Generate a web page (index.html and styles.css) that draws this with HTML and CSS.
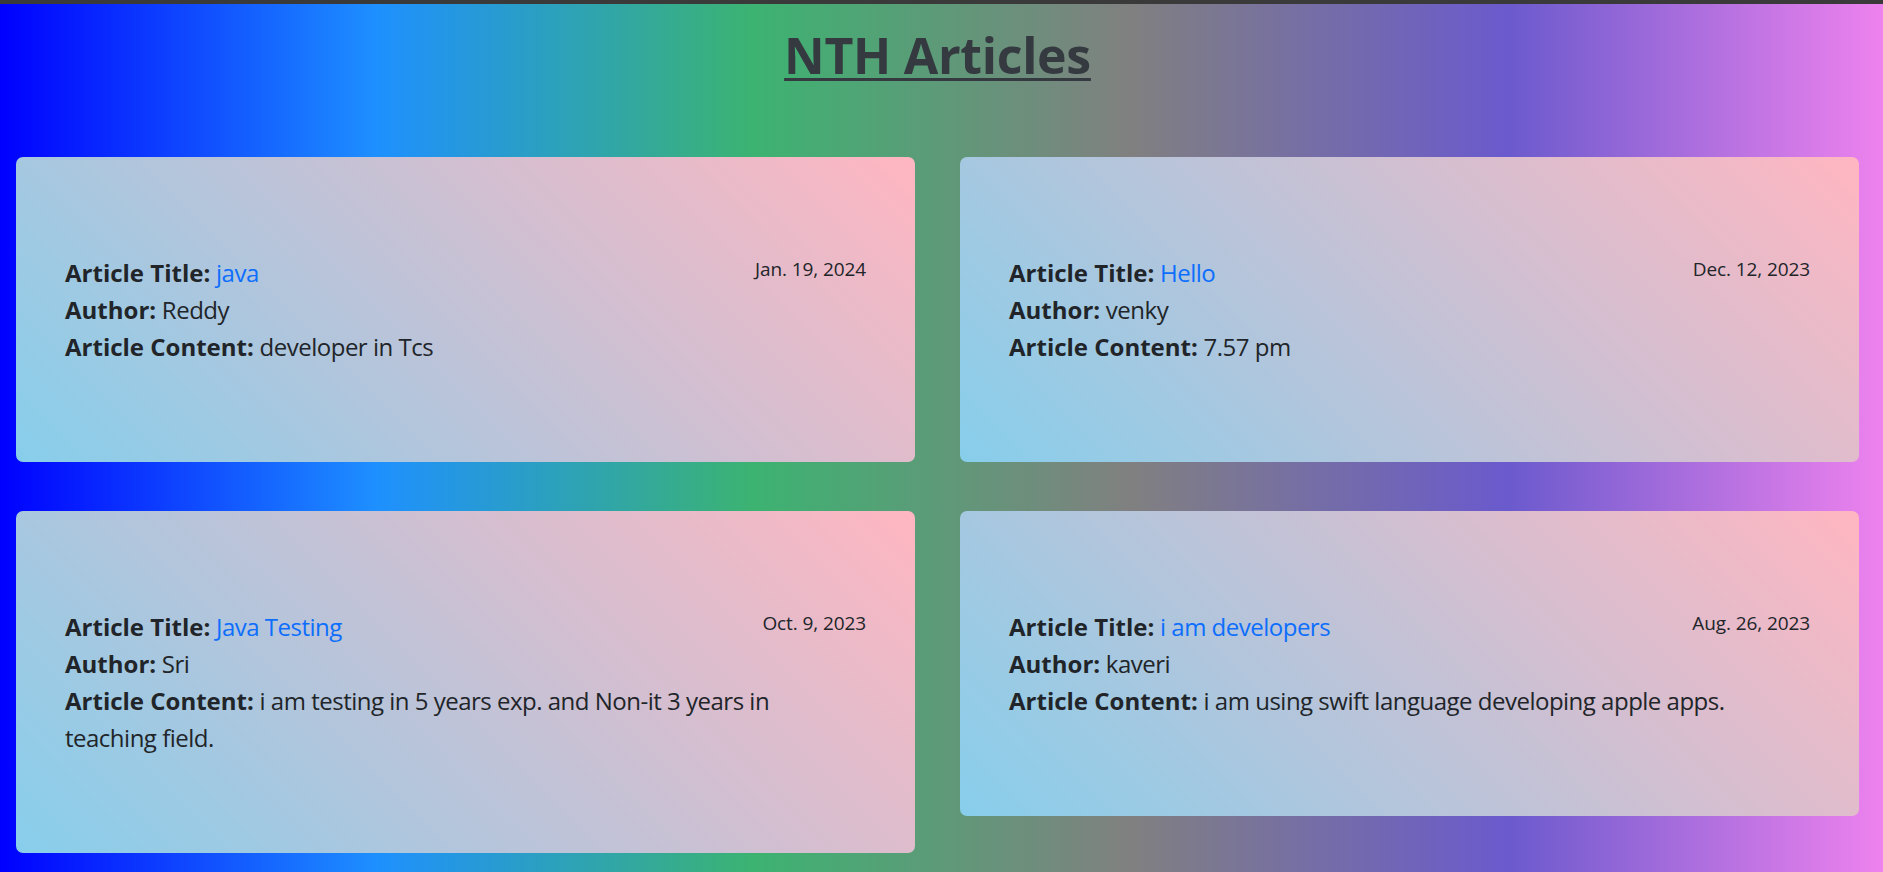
FILE: index.html
```html
<!DOCTYPE html>
<html lang="en">
<head>
<meta charset="utf-8">
<title>NTH Articles</title>
<link rel="stylesheet" href="styles.css">
</head>
<body>
<div class="topbar"></div>
<main class="page">
  <h1 class="page-title">NTH Articles</h1>
  <div class="grid">
    <article class="card">
      <span class="date">Jan. 19, 2024</span>
      <p class="line"><b>Article Title:</b> <a href="#" class="link">java</a></p>
      <p class="line"><b>Author:</b> Reddy</p>
      <p class="line"><b>Article Content:</b> developer in Tcs</p>
    </article>
    <article class="card">
      <span class="date">Dec. 12, 2023</span>
      <p class="line"><b>Article Title:</b> <a href="#" class="link">Hello</a></p>
      <p class="line"><b>Author:</b> venky</p>
      <p class="line"><b>Article Content:</b> 7.57 pm</p>
    </article>
    <article class="card">
      <span class="date">Oct. 9, 2023</span>
      <p class="line"><b>Article Title:</b> <a href="#" class="link">Java Testing</a></p>
      <p class="line"><b>Author:</b> Sri</p>
      <p class="line"><b>Article Content:</b> i am testing in 5 years exp. and Non-it 3 years in teaching field.</p>
    </article>
    <article class="card">
      <span class="date">Aug. 26, 2023</span>
      <p class="line"><b>Article Title:</b> <a href="#" class="link">i am developers</a></p>
      <p class="line"><b>Author:</b> kaveri</p>
      <p class="line"><b>Article Content:</b> i am using swift language developing apple apps.</p>
    </article>
  </div>
</main>
</body>
</html>
```
FILE: styles.css
```css
html {
  min-height: 100%;
  background: linear-gradient(to right, #0000ff, #1e90ff, #3cb371, #808080, #6a5acd, #ee82ee);
}
body {
  margin: 0;
  font-family: "Open Sans", "Noto Sans", sans-serif;
  color: #212529;
  overflow: hidden;
}
.topbar {
  height: 4px;
  background: #3a3a3a;
}
.page {
  padding: 0 24px 0 16px;
}
.page-title {
  margin: 21px 0 72px;
  font-size: 50px;
  line-height: 60px;
  font-weight: 700;
  letter-spacing: -0.3px;
  text-align: center;
  color: #343a40;
  text-decoration: underline;
  text-decoration-thickness: 3px;
  text-underline-offset: 4px;
}
.grid {
  display: grid;
  grid-template-columns: 1fr 1fr;
  column-gap: 45px;
  row-gap: 49px;
  align-items: start;
}
.card {
  padding: 97px 49px;
  border-radius: 7px;
  background: linear-gradient(45deg, #87ceeb, #ffb6c1);
}
.date {
  float: right;
  font-size: 19px;
  line-height: 30px;
  letter-spacing: -0.1px;
  margin-left: 16px;
}
.line {
  margin: 0;
  font-size: 24px;
  line-height: 37px;
  letter-spacing: -0.5px;
}
.line b {
  font-weight: 700;
  letter-spacing: 0;
}
.link {
  color: #0d6efd;
  text-decoration: none;
}
```
